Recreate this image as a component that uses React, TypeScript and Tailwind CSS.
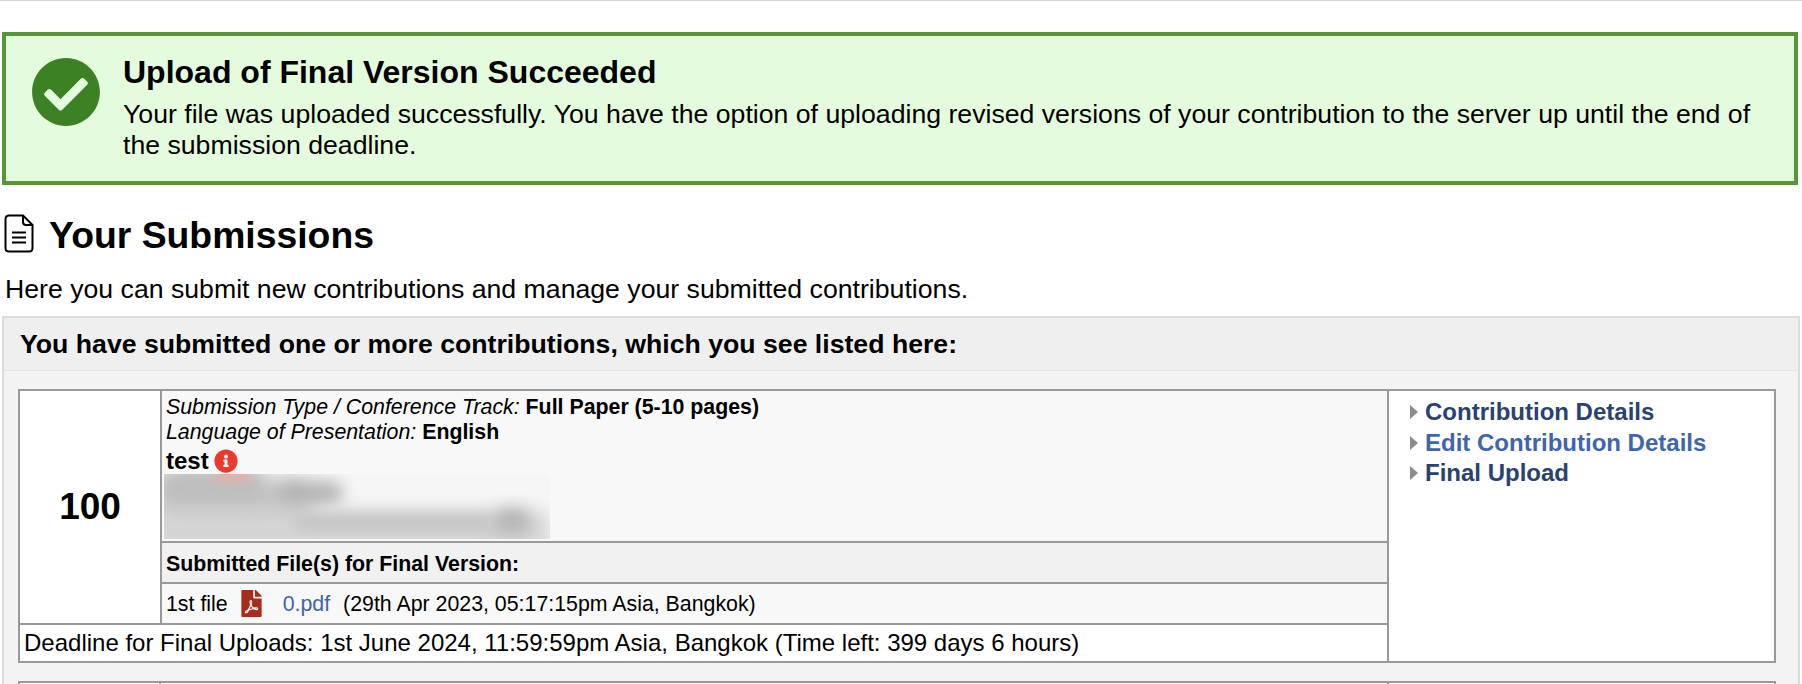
import { FaCheckCircle, FaFilePdf, FaInfoCircle } from "react-icons/fa";

function Arrow() {
  return (
    <svg width="10" height="16" viewBox="0 0 10 16" className="shrink-0">
      <path d="M1 1 L9 8 L1 15 Z" fill="#8c8c8c" />
    </svg>
  );
}

function FileIcon() {
  return (
    <svg width="30" height="39" viewBox="0 0 30 39" fill="none" stroke="#000" strokeWidth="2" className="mb-[3px] shrink-0">
      <path d="M5 1.5 H19 L28.5 11 V34 Q28.5 37.5 25 37.5 H5 Q1.5 37.5 1.5 34 V5 Q1.5 1.5 5 1.5 Z" />
      <path d="M19 1.5 V8 Q19 11 22 11 H28.5" />
      <path d="M8 18.5 H22 M8 23.5 H22 M8 28.5 H22" strokeWidth="2.2" />
    </svg>
  );
}

function ActionLink({ label, active }: { label: string; active?: boolean }) {
  return (
    <div className="flex h-[30.5px] items-center gap-[6px]">
      <Arrow />
      <a className={`text-[24px] font-bold ${active ? "text-[#3e65ae]" : "text-[#284272]"}`}>{label}</a>
    </div>
  );
}

function BlurredAuthors() {
  return (
    <div className="relative -ml-[2px] h-[65px] w-[386px] overflow-hidden bg-[#f6f6f6]">
      <div className="absolute -left-[10px] top-[6px] h-[54px] w-[160px] rounded-full bg-[#c8c8c8] blur-[9px]" />
      <div className="absolute -left-[8px] -top-[8px] h-[40px] w-[112px] rounded-full bg-[#bebebe] blur-[9px]" />
      <div className="absolute left-[50px] -top-[8px] h-[14px] w-[35px] rounded-full bg-[#eeaaa0] blur-[6px]" />
      <div className="absolute left-[113px] top-[7px] h-[24px] w-[66px] rounded-full bg-[#b4b4b4] blur-[8px]" />
      <div className="absolute -left-[10px] top-[38px] h-[40px] w-[395px] bg-[#d4d4d4] blur-[9px]" />
      <div className="absolute left-[130px] top-[40px] h-[16px] w-[200px] rounded-full bg-[#c4c4c4] blur-[7px]" />
      <div className="absolute left-[330px] top-[34px] h-[26px] w-[36px] rounded-full bg-[#b4b4b4] blur-[8px]" />
    </div>
  );
}

export default function App() {
  return (
    <div className="h-[684px] overflow-hidden border-t border-[#d4d4d4] bg-white font-['Liberation_Sans',Arial,sans-serif] text-black">
      <div className="mx-[2px] mt-[31px] flex h-[153px] w-[1796px] items-start border-4 border-[#579737] bg-[#e4fcdd]">
        <FaCheckCircle className="ml-[25px] mt-[21px] shrink-0 text-[#3c8224]" size={70} />
        <div className="ml-[22px] mt-[17px] pr-[30px]">
          <h2 className="text-[32px] leading-[38px] font-bold">Upload of Final Version Succeeded</h2>
          <p className="mt-[8px] text-[26.67px] leading-[31px]">
            Your file was uploaded successfully. You have the option of uploading revised versions of your contribution to the server up until the end of the submission deadline.
          </p>
        </div>
      </div>

      <div className="mt-[28px] flex items-center pl-[4px]">
        <FileIcon />
        <h1 className="ml-[15px] text-[37.33px] leading-[44px] font-bold">Your Submissions</h1>
      </div>
      <p className="mt-[17px] pl-[5px] text-[26.67px] leading-[30px]">
        Here you can submit new contributions and manage your submitted contributions.
      </p>

      <div className="mx-[2px] mt-[12px] h-[400px] border-2 border-[#dcdcdc] bg-[#f3f3f3]">
        <div className="flex h-[53px] items-center border-b border-[#e3e3e3] bg-[#efefef] pl-[16px] text-[26.67px] font-bold">
          You have submitted one or more contributions, which you see listed here:
        </div>
        <table className="ml-[14px] mt-[18px] w-[1758px] border-collapse border-2 border-[#999999] table-fixed">
          <colgroup>
            <col className="w-[142px]" />
            <col className="w-[1227px]" />
            <col />
          </colgroup>
          <tbody>
            <tr className="h-[152px]">
              <td rowSpan={3} className="border-2 border-[#999999] bg-white text-center text-[37px] font-bold">100</td>
              <td className="border-2 border-[#999999] bg-[#f8f8f8] px-[4px] pt-[4px] align-top text-[21.33px] leading-[25px]">
                <div><i>Submission Type / Conference Track:</i> <b>Full Paper (5-10 pages)</b></div>
                <div><i>Language of Presentation:</i> <b>English</b></div>
                <div className="mt-[2px] flex h-[27px] items-center gap-[5px] text-[24px] font-bold leading-[27px]">
                  test <FaInfoCircle className="text-[#ec3a2c]" size={24} />
                </div>
                <BlurredAuthors />
              </td>
              <td rowSpan={4} className="border-2 border-[#999999] bg-white pl-[20px] pt-[6px] align-top">
                <ActionLink label="Contribution Details" />
                <ActionLink label="Edit Contribution Details" active />
                <ActionLink label="Final Upload" />
              </td>
            </tr>
            <tr className="h-[41px]">
              <td className="border-2 border-[#999999] bg-[#f1f1f1] px-[4px] pt-[4px] text-[21.33px] font-bold">Submitted File(s) for Final Version:</td>
            </tr>
            <tr className="h-[41px]">
              <td className="border-2 border-[#999999] bg-[#f8f8f8] px-[4px] pt-[3px] text-[21.33px]">
                <div className="flex items-center">
                  1st file
                  <FaFilePdf className="-mt-[2px] ml-[10px] text-[#a82c1c]" size={27} />
                  <a className="ml-[18px] text-[#3e65ae]">0.pdf</a>
                  <span className="ml-[13px]">(29th Apr 2023, 05:17:15pm Asia, Bangkok)</span>
                </div>
              </td>
            </tr>
            <tr className="h-[38px]">
              <td colSpan={2} className="border-2 border-[#999999] bg-white px-[4px] text-[24px]">
                Deadline for Final Uploads: 1st June 2024, 11:59:59pm Asia, Bangkok (Time left: 399 days 6 hours)
              </td>
            </tr>
          </tbody>
        </table>
        <div className="ml-[14px] mt-[18px] flex h-[30px] w-[1758px] border-2 border-[#999999] bg-white">
          <div className="w-[141px] border-r-2 border-[#999999]" />
          <div className="w-[1228px] border-r-2 border-[#999999] bg-[#f8f8f8]" />
        </div>
      </div>
    </div>
  );
}
